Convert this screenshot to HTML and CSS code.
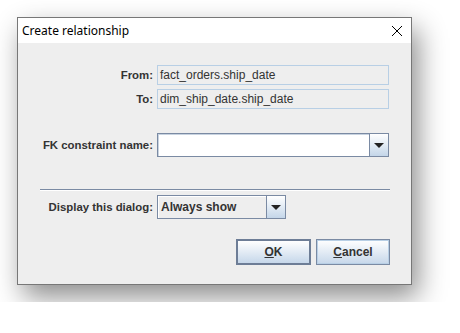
FILE: index.html
```html
<!DOCTYPE html>
<html lang="en">

<head>
    <meta charset="UTF-8" />
    <title>Create relationship</title>
    <link rel="stylesheet" href="styles.css">
</head>

<body>
    <div class="dialog">
        <div class="titlebar">
            <span class="title">Create relationship</span>
            <svg class="close" width="12" height="12" viewBox="0 0 12 12">
                <path d="M1 1 L11 11 M11 1 L1 11" stroke="#000" stroke-width="1" fill="none" />
            </svg>
        </div>

        <div class="content">
            <div class="form">
                <label class="lbl">From:</label>
                <div class="ro-field">fact_orders.ship_date</div>

                <label class="lbl gap-sm">To:</label>
                <div class="ro-field gap-sm">dim_ship_date.ship_date</div>

                <label class="lbl gap-lg">FK constraint name:</label>
                <div class="combo edit gap-lg">
                    <input type="text" class="combo-input" />
                    <span class="arrow-btn"><span class="arrow"></span></span>
                </div>

                <div class="separator"></div>

                <label class="lbl gap-sm">Display this dialog:</label>
                <div class="combo choice gap-sm">
                    <span class="combo-value">Always show</span>
                    <span class="arrow-btn"><span class="arrow"></span></span>
                </div>
            </div>

            <div class="buttons">
                <button class="btn default"><u>O</u>K</button>
                <button class="btn"><u>C</u>ancel</button>
            </div>
        </div>
    </div>
</body>

</html>
```

FILE: styles.css
```css
:root {
    --panel: #eeeeee;
    --slate: #7a8aa3;
    --light-blue: #b8cfe5;
    --label: #333333;
}

* {
    margin: 0;
    padding: 0;
    box-sizing: border-box;
}

body {
    background: #ffffff;
    padding: 17px;
    font-family: 'Liberation Sans', Arial, sans-serif;
    font-size: 12px;
}

.dialog {
    width: 395px;
    height: 268px;
    border: 1px solid #777777;
    background: var(--panel);
    display: flex;
    flex-direction: column;
    box-shadow: 6px 12px 26px rgba(0, 0, 0, 0.45);
}

.titlebar {
    height: 25px;
    background: #ffffff;
    display: flex;
    align-items: center;
    justify-content: space-between;
    padding: 0 8px 0 4px;
}

.title {
    font-family: 'Noto Sans', 'Liberation Sans', sans-serif;
    font-size: 12px;
    color: #000;
}

.close {
    display: block;
    margin-top: 1px;
}

.content {
    flex: 1;
    padding: 22px 21px 0 22px;
    display: flex;
    flex-direction: column;
}

.form {
    display: grid;
    grid-template-columns: 113px 232px;
    column-gap: 4px;
    align-items: center;
}

.lbl {
    text-align: right;
    font-weight: bold;
    font-size: 11.4px;
    color: var(--label);
    white-space: nowrap;
}

.gap-sm {
    margin-top: 4px;
}

.gap-lg {
    margin-top: 24px;
}

.ro-field {
    height: 20px;
    border: 1px solid var(--light-blue);
    background: var(--panel);
    color: #333;
    padding: 0 2px;
    line-height: 18px;
}

.combo {
    display: flex;
    height: 24px;
    border: 1px solid var(--slate);
}

.combo-input {
    flex: 1;
    min-width: 0;
    border: none;
    border-right: 1px solid var(--slate);
    background: #fff;
    box-shadow: inset 1px 1px 0 #c8d3e0;
    outline: none;
}

.combo.choice {
    width: 129px;
    background: #eeeeee;
}

.combo-value {
    flex: 1;
    font-weight: bold;
    color: var(--label);
    padding-left: 3px;
    line-height: 22px;
    border-right: 1px solid var(--slate);
    box-shadow: inset 1px 1px 0 #ffffff;
}

.arrow-btn {
    width: 18px;
    background: linear-gradient(#ffffff, #c4d6e9);
    display: flex;
    align-items: center;
    justify-content: center;
}

.arrow {
    width: 0;
    height: 0;
    border-left: 5px solid transparent;
    border-right: 5px solid transparent;
    border-top: 5px solid #222;
    margin-top: 1px;
}

.separator {
    grid-column: 1 / 3;
    margin-top: 32px;
    width: 350px;
    height: 2px;
    border-top: 1px solid var(--slate);
    border-bottom: 1px solid #ffffff;
}

.buttons {
    display: flex;
    justify-content: flex-end;
    gap: 5px;
    margin-top: 20px;
}

.btn {
    height: 26px;
    font-family: 'Liberation Sans', Arial, sans-serif;
    font-size: 12px;
    font-weight: bold;
    color: var(--label);
    background: linear-gradient(#ffffff, #c6d7ea);
    border: 1px solid var(--slate);
    box-shadow: inset 0 0 0 1px #b8cfe5;
}

.btn.default {
    width: 75px;
    border: 2px solid #6d7d96;
    box-shadow: none;
}

.btn:not(.default) {
    width: 74px;
}
```
